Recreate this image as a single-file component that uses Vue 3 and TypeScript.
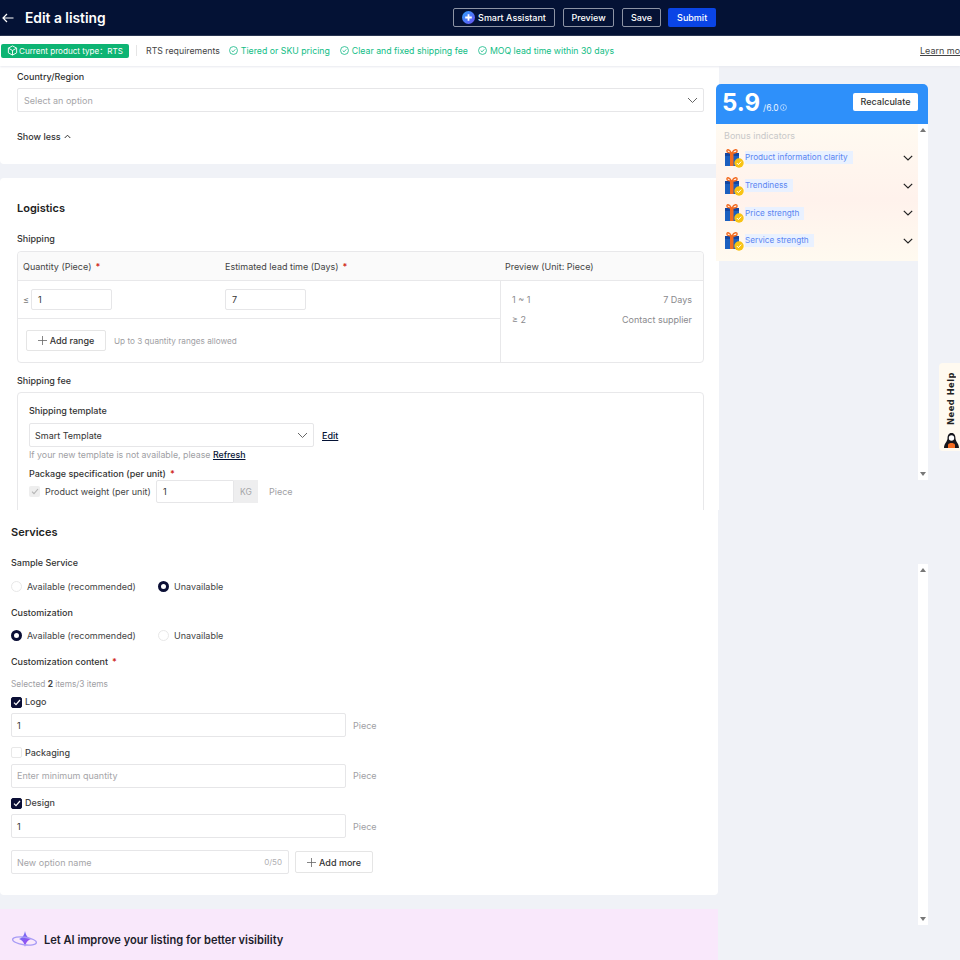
<script setup lang="ts">
const reqs: string[] = ['Tiered or SKU pricing', 'Clear and fixed shipping fee', 'MOQ lead time within 30 days']
const bonus: string[] = ['Product information clarity', 'Trendiness', 'Price strength', 'Service strength']
const quantityOptions = [
  { name: 'Logo', checked: true, value: '1', placeholder: '' },
  { name: 'Packaging', checked: false, value: '', placeholder: 'Enter minimum quantity' },
  { name: 'Design', checked: true, value: '1', placeholder: '' },
]
</script>

<template>
  <div class="page">
    <section class="screen top">
      <header class="topbar">
        <svg class="back" width="12" height="10" viewBox="0 0 12 10" fill="none" stroke="#fff" stroke-width="1.2"><path d="M11.5 5H1M5 1 1 5l4 4" /></svg>
        <h1>Edit a listing</h1>
        <div class="actions">
          <button class="ghost smart">
            <svg width="13" height="13" viewBox="0 0 13 13"><defs><linearGradient id="sa" x1="0" y1="0" x2="1" y2="1"><stop offset="0" stop-color="#2fa3ff" /><stop offset="1" stop-color="#6a4df0" /></linearGradient></defs><circle cx="6.5" cy="6.5" r="6.5" fill="url(#sa)" /><path d="M6.5 3.2v6.6M3.2 6.5h6.6" stroke="#fff" stroke-width="1.8" /></svg>
            Smart Assistant
          </button>
          <button class="ghost preview">Preview</button>
          <button class="ghost">Save</button>
          <button class="primary">Submit</button>
        </div>
      </header>
      <div class="subbar">
        <span class="type-tag">
          <svg width="11" height="11" viewBox="0 0 12 12" fill="none" stroke="#fff" stroke-width="1"><path d="M6 1 10.500 3.400v5.200L6 11 1.500 8.600V3.400zM1.500 3.400 6 6l4.500-2.600M6 6v5" /></svg>
          Current product type：RTS
        </span>
        <i class="sep"></i>
        <span class="req-title">RTS requirements</span>
        <span v-for="r in reqs" :key="r" class="req">
          <svg width="9" height="9" viewBox="0 0 10 10" fill="none" stroke="#12b886" stroke-width="0.9"><circle cx="5" cy="5" r="4.400" /><path d="M3 5.100 4.500 6.500 7 3.700" /></svg>
          {{ r }}
        </span>
        <a class="learn">Learn more</a>
      </div>

      <div class="workspace">
        <main class="main">
          <div class="card first">
            <label class="label">Country/Region</label>
            <div class="select country"><span class="ph">Select an option</span>
              <svg class="chev" width="11" height="7" viewBox="0 0 11 7" fill="none" stroke="#666" stroke-width="1"><path d="M1 1l4.500 4.500L10 1" /></svg>
            </div>
            <div class="less">Show less
              <svg width="7" height="5" viewBox="0 0 7 5" fill="none" stroke="#333" stroke-width="1"><path d="M.7 4 3.500 1.200 6.300 4" /></svg>
            </div>
          </div>

          <div class="card logistics">
            <h2>Logistics</h2>
            <label class="label ship">Shipping</label>
            <div class="table">
              <div class="thead">
                <span class="c1">Quantity (Piece)<b class="star">*</b></span>
                <span class="c2">Estimated lead time (Days)<b class="star">*</b></span>
                <span class="c3">Preview (Unit: Piece)</span>
              </div>
              <div class="tbody">
                <div class="tleft">
                  <div class="trow">
                    <div class="qty"><em>≤</em><div class="input small">1</div></div>
                    <div class="input small">7</div>
                  </div>
                  <div class="tadd">
                    <button class="outline range"><svg width="9" height="9" viewBox="0 0 9 9" stroke="#666" stroke-width="0.8"><path d="M4.500 0v9M0 4.500h9" /></svg>Add range</button>
                    <span class="hint">Up to 3 quantity ranges allowed</span>
                  </div>
                </div>
                <div class="tright">
                  <div class="pv"><span>1 ~ 1</span><span>7 Days</span></div>
                  <div class="pv"><span>≥ 2</span><span>Contact supplier</span></div>
                </div>
              </div>
            </div>
            <label class="label fee">Shipping fee</label>
            <div class="feebox">
              <label class="label">Shipping template</label>
              <div class="tpl-row">
                <div class="select tpl"><span>Smart Template</span>
                  <svg class="chev" width="11" height="7" viewBox="0 0 11 7" fill="none" stroke="#666" stroke-width="1"><path d="M1 1l4.500 4.500L10 1" /></svg>
                </div>
                <a class="link edit">Edit</a>
              </div>
              <p class="newtpl">If your new template is not available, please <a class="link">Refresh</a></p>
              <label class="label spec">Package specification (per unit)<b class="star">*</b></label>
              <div class="weight">
                <span class="disabled-check"><svg width="8" height="7" viewBox="0 0 8 7" fill="none" stroke="#b5b5b5" stroke-width="1.100"><path d="M1 3.600 3 5.600 7 1" /></svg></span>
                <span class="wlabel">Product weight (per unit)</span>
                <div class="input wval">1</div><span class="kg">KG</span>
                <span class="unit">Piece</span>
              </div>
            </div>
          </div>
        </main>

        <aside class="aside">
          <div class="score">
            <div class="num"><strong>5.9</strong><span>/6.0</span>
              <svg width="7" height="7" viewBox="0 0 8 8" fill="none" stroke="#d6e9ff" stroke-width="0.8"><circle cx="4" cy="4" r="3.400" /><path d="M4 3.400v2.400M4 2v.8" /></svg>
            </div>
            <button class="recalc">Recalculate</button>
          </div>
          <div class="score-body">
            <div class="bonus">
              <div class="bonus-title">Bonus indicators</div>
              <div v-for="b in bonus" :key="b" class="bonus-row">
                <svg class="gift" width="20" height="20" viewBox="0 0 20 20">
                  <rect x="1" y="5" width="14" height="13" fill="#1b5fbf" />
                  <rect x="1" y="5" width="14" height="3" fill="#1446a0" />
                  <rect x="6" y="5" width="3.500" height="13" fill="#f26b21" />
                  <path d="M7.500 5C5 1 2.500 1 3 3.400 3.300 5 6 5 7.500 5ZM8 5c2-4 5.500-4 5-1.500C12.700 5 9.500 5 8 5Z" fill="none" stroke="#f26b21" stroke-width="1.400" />
                  <circle cx="15" cy="15" r="4.700" fill="#f8c313" />
                  <path d="M12.800 15l1.600 1.600 2.800-3" fill="none" stroke="#fff" stroke-width="1" />
                </svg>
                <span class="bonus-name">{{ b }}</span>
                <svg class="bonus-chev" width="10" height="6" viewBox="0 0 10 6" fill="none" stroke="#222" stroke-width="1.200"><path d="M.8.8 5 5l4.200-4.200" /></svg>
              </div>
            </div>
            <div class="scrolltrack upper">
              <i class="tri up"></i><i class="tri down"></i>
            </div>
          </div>
        </aside>
      </div>

      <div class="help">
        <span>Need Help</span>
        <svg width="17" height="17" viewBox="0 0 17 17">
          <path d="M8.500 1C5.500 1 4.500 3.500 4.500 6.500 4.500 9.500 1 11.500 1 16h15c0-4.500-3.500-6.500-3.500-9.500C12.500 3.500 11.500 1 8.500 1Z" fill="#15151c" />
          <circle cx="8.500" cy="6" r="2.700" fill="#fff" />
          <path d="M5 12.500c1-2 6-2 7 0V16H5Z" fill="#f26b21" />
        </svg>
      </div>
    </section>

    <section class="screen bottom">
      <div class="bottom-main">
        <div class="card services">
          <h2>Services</h2>
          <label class="label s-sample">Sample Service</label>
          <div class="radios first-radios">
            <span class="radio"><i class="dot"></i>Available (recommended)</span>
            <span class="radio"><i class="dot on"></i>Unavailable</span>
          </div>
          <label class="label s-next">Customization</label>
          <div class="radios">
            <span class="radio"><i class="dot on"></i>Available (recommended)</span>
            <span class="radio"><i class="dot"></i>Unavailable</span>
          </div>
          <label class="label s-next">Customization content<b class="star">*</b></label>
          <p class="selected">Selected <b>2</b> items/3 items</p>
          <div v-for="o in quantityOptions" :key="o.name" class="opt">
            <div class="opt-name">
              <span class="box" :class="{ on: o.checked }">
                <svg v-if="o.checked" width="8" height="7" viewBox="0 0 8 7" fill="none" stroke="#fff" stroke-width="1.300"><path d="M1 3.600 3 5.600 7 1" /></svg>
              </span>
              {{ o.name }}
            </div>
            <div class="opt-line">
              <div class="input wide"><span v-if="o.value">{{ o.value }}</span><span v-else class="ph">{{ o.placeholder }}</span></div>
              <span class="unit">Piece</span>
            </div>
          </div>
          <div class="newopt">
            <div class="input named"><span class="ph">New option name</span><small>0/50</small></div>
            <button class="outline more"><svg width="9" height="9" viewBox="0 0 9 9" stroke="#666" stroke-width="0.8"><path d="M4.500 0v9M0 4.500h9" /></svg>Add more</button>
          </div>
        </div>
        <div class="ai">
          <svg width="28" height="20" viewBox="0 0 28 20">
            <defs><linearGradient id="ai" x1="0" y1="0" x2="1" y2="1"><stop offset="0" stop-color="#5a7cf5" /><stop offset="1" stop-color="#b23df0" /></linearGradient></defs>
            <path d="M14 1c1 5 3 7 6 8-3 1-5 3-6 8-1-5-3-7-6-8 3-1 5-3 6-8Z" fill="url(#ai)" />
            <ellipse cx="13.500" cy="11" rx="12" ry="3.800" transform="rotate(8 13.500 11)" fill="none" stroke="#a79bf5" stroke-width="1.300" />
          </svg>
          <span>Let AI improve your listing for better visibility</span>
        </div>
      </div>
      <div class="bottom-side">
        <div class="scrolltrack lower"><i class="tri up"></i><i class="tri down"></i></div>
      </div>
    </section>
  </div>
</template>

<style>
html, body { margin: 0; background: #f0f2f7; }
</style>

<style scoped>
.page { width: 960px; height: 960px; overflow: hidden; background: #f0f2f7; font-family: Inter, "Noto Sans CJK SC", "Noto Sans", sans-serif; font-size: 9px; color: #333; }
.screen { position: relative; overflow: hidden; }
.top { height: 510px; }
.bottom { height: 450px; display: flex; }
h1, h2, p { margin: 0; }
button { font-family: inherit; cursor: pointer; }
label { display: block; }

.topbar { height: 36px; box-sizing: border-box; background: #041235; display: flex; align-items: center; color: #fff; border-bottom: 1px solid #1a2745; }
.back { margin-left: 2px; flex: none; }
.topbar h1 { font-size: 13.800px; font-weight: 600; margin-left: 11px; width: 82px; white-space: nowrap; }
.actions { display: flex; gap: 8px; margin-left: 346px; }
.ghost, .primary { height: 19px; box-sizing: border-box; border-radius: 2px; font-size: 9px; font-weight: 500; color: #fff; padding: 0 8px; display: flex; align-items: center; gap: 3px; }
.ghost { background: transparent; border: 1px solid #8d94a5; }
.smart { width: 102px; justify-content: center; padding: 0; }
.preview { width: 51px; justify-content: center; padding: 0; }
.primary { background: #0a45e6; border: none; padding: 0 9px; margin-left: -1px; }

.subbar { height: 30px; box-sizing: border-box; background: #fff; display: flex; align-items: center; white-space: nowrap; box-shadow: 0 1px 2px #e8eaef; position: relative; z-index: 1; padding-bottom: 1px; }
.type-tag { margin-left: 1px; height: 14px; width: 128px; box-sizing: border-box; background: #0db473; color: #fff; border-radius: 2px; display: flex; align-items: center; gap: 1px; padding-left: 6px; font-size: 8.100px; flex: none; }
.sep { width: 1px; height: 11px; background: #e5e5e5; margin: 0 9px 0 7px; flex: none; }
.req-title { font-size: 8.750px; color: #444; margin-right: 9px; }
.req { color: #10bd85; display: flex; align-items: center; gap: 3px; margin-right: 10px; font-size: 8.750px; }
.learn { position: absolute; left: 920px; text-decoration: underline; color: #444; font-size: 9px; }

.workspace { display: flex; height: 444px; }
.main { width: 719px; flex: none; display: flex; flex-direction: column; gap: 14px; }
.card { background: #fff; border-radius: 4px; box-sizing: border-box; flex: none; }
.first { height: 98px; padding: 5px 16px 0 17px; border-radius: 0 0 4px 4px; }
.label { font-size: 9px; font-weight: 500; color: #333; line-height: 11px; }
.select, .input { box-sizing: border-box; border: 1px solid #e6e6e8; border-radius: 2px; background: #fff; display: flex; align-items: center; font-size: 9px; color: #333; padding-left: 6px; }
.ph { color: #a5a5a8; }
.select { justify-content: space-between; padding-right: 5px; }
.country { height: 24px; width: 687px; margin-top: 6px; }
.less { margin-top: 19px; font-weight: 500; color: #333; display: flex; align-items: center; gap: 3px; line-height: 11px; }

.logistics { height: 400px; padding: 0 16px 0 17px; border-radius: 4px 4px 0 0; }
h2 { font-size: 11px; font-weight: 600; color: #222; line-height: 14px; }
.logistics h2 { padding-top: 23px; }
.ship { margin-top: 18px; }
.table { width: 687px; height: 112px; box-sizing: border-box; margin-top: 7px; border: 1px solid #e8e8ea; border-radius: 4px; display: flex; flex-direction: column; }
.thead { height: 28px; background: #fafafa; display: flex; align-items: center; border-bottom: 1px solid #e8e8ea; border-radius: 4px 4px 0 0; flex: none; color: #444; box-sizing: content-box; }
.thead span { display: block; }
.c1 { width: 207px; padding-left: 5px; box-sizing: border-box; }
.c2 { width: 280px; }
.star { color: #d0281c; margin-left: 4px; font-weight: 600; }
.tbody { display: flex; flex: 1; }
.tleft { width: 482px; border-right: 1px solid #e8e8ea; flex: none; }
.trow { height: 38px; box-sizing: border-box; border-bottom: 1px solid #e8e8ea; display: flex; align-items: center; }
.qty { width: 207px; padding-left: 5px; box-sizing: border-box; display: flex; align-items: center; gap: 2px; }
.qty em { font-style: normal; color: #777; }
.small { width: 81px; height: 21px; }
.tadd { display: flex; align-items: center; padding: 11px 0 0 8px; gap: 8px; }
.outline { background: #fff; border: 1px solid #e5e5e5; border-radius: 2px; box-sizing: border-box; font-size: 9px; color: #333; font-weight: 500; display: flex; align-items: center; gap: 3px; justify-content: center; padding: 0; }
.range { width: 80px; height: 21px; }
.hint { color: #a0a0a4; font-size: 8.200px; }
.tright { flex: 1; padding: 13px 11px 0 11px; }
.pv { display: flex; justify-content: space-between; color: #8a8a8d; line-height: 11px; margin-bottom: 9px; }
.fee { margin-top: 12px; }
.feebox { width: 687px; height: 140px; box-sizing: border-box; margin-top: 6px; border: 1px solid #e8e8ea; border-radius: 4px 4px 0 0; padding: 12px 0 0 11px; }
.tpl-row { display: flex; align-items: center; margin-top: 7px; gap: 8px; }
.tpl { width: 285px; height: 24px; padding-left: 5px; }
.link { color: #041235; font-weight: 500; text-decoration: underline; }
.newtpl { color: #a0a0a4; margin-top: 2px; line-height: 11px; font-size: 8.800px; }
.spec { margin-top: 8px; }
.weight { display: flex; align-items: center; margin-top: 1px; }
.disabled-check { width: 11px; height: 11px; background: #eee; border-radius: 2px; display: flex; align-items: center; justify-content: center; }
.wlabel { margin-left: 5px; width: 111px; color: #444; }
.wval { width: 78px; height: 23px; border-radius: 2px 0 0 2px; }
.kg { width: 24px; height: 23px; background: #eeeeef; display: flex; align-items: center; justify-content: center; color: #a5a5a8; font-size: 8.500px; }
.unit { margin-left: 11px; color: #a0a0a4; }

.aside { margin: 18px 0 0 -3px; width: 212px; flex: none; }
.score { height: 40px; background: #2e90fa; border-radius: 5px 5px 0 0; display: flex; align-items: center; justify-content: space-between; padding: 0 10px 0 6px; box-sizing: border-box; }
.num { display: flex; align-items: baseline; gap: 1px; color: #fff; margin-top: -2px; }
.num strong { font-size: 24px; font-weight: 700; line-height: 28px; }
.num span { font-size: 8.500px; margin-left: 2px; color: #eaf4ff; }
.recalc { width: 65px; height: 18px; background: #fff; border: none; border-radius: 2px; font-size: 9px; font-weight: 500; color: #333; padding: 0; margin-top: -5px; }
.score-body { display: flex; height: 356px; align-items: flex-start; }
.bonus { width: 202px; height: 137px; background: linear-gradient(180deg, #fffaf1 0%, #fff2ec 55%, #fffaf0 100%); box-sizing: border-box; padding: 6px 0 0 8px; }
.bonus-title { color: #c8c8c8; line-height: 11px; margin-bottom: 3px; }
.bonus-row { height: 27.700px; display: flex; align-items: center; }
.gift { flex: none; margin-right: 1px; }
.bonus-name { color: #5b86f2; background: #e9f1ff; padding: 1px 5px 1px 0; line-height: 11px; font-size: 8.200px; }
.bonus-chev { margin-left: auto; margin-right: 5px; }
.scrolltrack { width: 10px; background: #fff; display: flex; flex-direction: column; justify-content: space-between; align-items: center; box-sizing: border-box; padding: 4px 0; }
.upper { height: 356px; }
.tri { width: 0; height: 0; border-left: 3px solid transparent; border-right: 3px solid transparent; }
.tri.up { border-bottom: 4px solid #777; }
.tri.down { border-top: 4px solid #777; }

.help { position: absolute; left: 939px; top: 363px; width: 21px; height: 88px; background: #fffaf0; border-radius: 4px 0 0 4px; display: flex; flex-direction: column; align-items: center; justify-content: space-between; padding: 9px 0 2px 3px; box-sizing: border-box; }
.help span { writing-mode: vertical-rl; transform: rotate(180deg); font-family: "DejaVu Sans", sans-serif; font-size: 8.300px; font-weight: 700; letter-spacing: .5px; color: #222; }

.bottom-main { width: 718px; flex: none; }
.services { height: 385px; padding: 0 0 0 11px; border-radius: 0 0 4px 4px; }
.services h2 { padding-top: 15px; }
.s-sample { margin-top: 18px; }
.radios { display: flex; gap: 22px; margin-top: 12px; height: 11px; align-items: center; }
.first-radios { margin-top: 13px; }
.radio { display: flex; align-items: center; gap: 5px; color: #444; line-height: 11px; }
.radio:first-child { width: 125px; }
.dot { width: 11px; height: 11px; border-radius: 50%; border: 1px solid #e8e8e8; box-sizing: border-box; background: #fff; flex: none; }
.dot.on { border: 3px solid #0b0f36; }
.s-next { margin-top: 15px; }
.selected { margin-top: 12px; color: #a0a0a4; font-size: 8.300px; line-height: 11px; }
.selected b { color: #444; }
.opt { margin-top: 6px; }
.opt + .opt { margin-top: 9.500px; }
.opt-name { display: flex; align-items: center; gap: 3px; color: #444; line-height: 12px; font-weight: 500; }
.box { width: 11px; height: 11px; box-sizing: border-box; border: 1px solid #e8e8e8; border-radius: 2px; display: flex; align-items: center; justify-content: center; }
.box.on { background: #0b0f36; border-color: #0b0f36; }
.opt-line { display: flex; align-items: center; margin-top: 5px; }
.wide { width: 335px; height: 24px; padding-left: 5px; }
.opt-line .unit { margin-left: 7px; }
.newopt { display: flex; align-items: center; gap: 6px; margin-top: 12px; }
.named { width: 278px; height: 24px; justify-content: space-between; padding: 0 6px 0 5px; }
.named small { color: #b0b0b3; font-size: 8px; }
.more { width: 78px; height: 22px; }
.ai { margin-top: 14px; height: 51px; box-sizing: border-box; background: #f9e8fb; display: flex; align-items: center; padding: 10px 0 0 11px; gap: 5px; font-size: 11.100px; font-weight: 600; color: #1d1d2c; }
.bottom-side { flex: 1; padding: 54px 0 0 200px; }
.lower { height: 361px; }
</style>
